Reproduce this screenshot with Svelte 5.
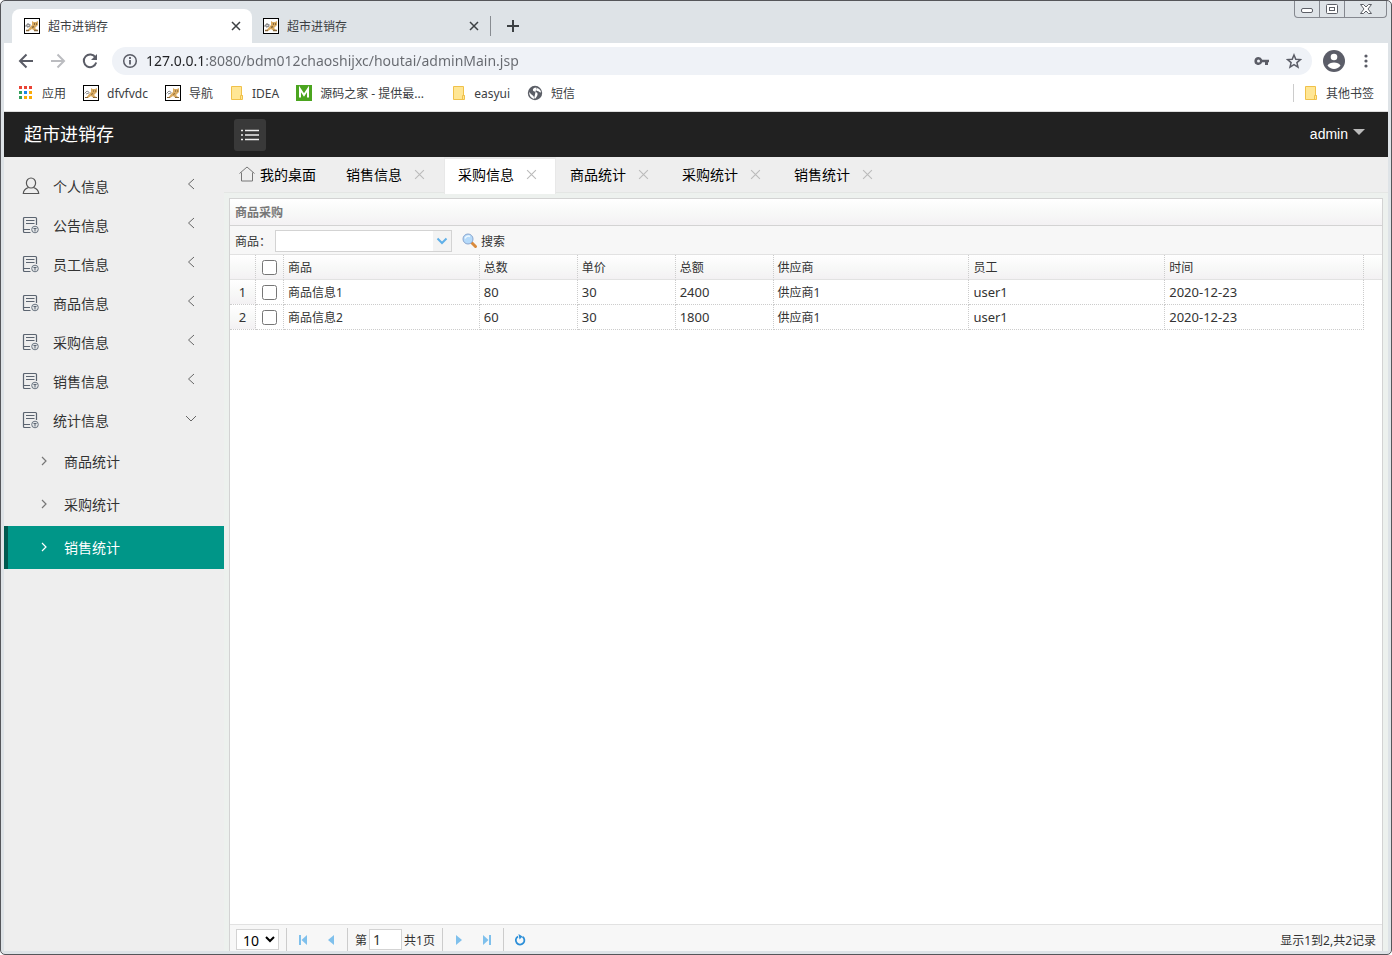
<script lang="ts">
  type Bookmark = {
    name: string;
    icon: string;
  }
  const bookmarks: Bookmark[] = [
    { name: '应用', icon: 'apps' },
    { name: 'dfvfvdc', icon: 'cat' },
    { name: '导航', icon: 'cat' },
    { name: 'IDEA', icon: 'folder' },
    { name: '源码之家 - 提供最...', icon: 'm' },
    { name: 'easyui', icon: 'folder' },
    { name: '短信', icon: 'globe' }
  ]
  const appColors = ['#ea4335', '#ea4335', '#ea4335', '#34a05c', '#1a86e8', '#fbab05', '#34a05c', '#fbab05', '#fbab05']

  // SIDE MENU
  const menus: string[] = ['个人信息', '公告信息', '员工信息', '商品信息', '采购信息', '销售信息', '统计信息']
  const subMenus: string[] = ['商品统计', '采购统计', '销售统计']
  let openMenu = $state('统计信息')
  let currentSub = $state('销售统计')

  // TABS
  const tabs: string[] = ['销售信息', '采购信息', '商品统计', '采购统计', '销售统计']
  let currentTab = $state('采购信息')

  // GRID
  const columns: string[] = ['商品', '总数', '单价', '总额', '供应商', '员工', '时间']
  const rows: string[][] = [
    ['商品信息1', '80', '30', '2400', '供应商1', 'user1', '2020-12-23'],
    ['商品信息2', '60', '30', '1800', '供应商1', 'user1', '2020-12-23']
  ]
  const isLatin = (text: string) => /^[\d\w-]+$/.test(text)
</script>

{#snippet icon(name: string)}
  {#if name == 'cat'}
    <svg width="16" height="16" viewBox="0 0 16 16">
      <rect x="0.5" y="0.5" width="15" height="15" fill="#fff" stroke="#000" />
      <path d="M8 3l1.500 1h2.500L14 3v4l-1.500 1.500L11 10l2.500 2.500H10L8 11l-3 2H3l3-4 2-2z" fill="#d9ab62" />
      <path d="M1.500 8.500L4 6l2.500 1.500M3 9l3-1" fill="none" stroke="#8d8d8d" />
      <path d="M2 12.500h3M10 12.500h4M8 9.500l2-1" fill="none" stroke="#8a6a3c" />
      <path d="M10 6h1M12 6h1" stroke="#6d5430" />
    </svg>
  {:else if name == 'apps'}
    <svg width="16" height="16" viewBox="0 0 16 16">
      {#each appColors as color, i}
        <rect x={1 + (i % 3) * 5} y={1 + Math.floor(i / 3) * 5} width="3" height="3" fill={color} />
      {/each}
    </svg>
  {:else if name == 'folder'}
    <svg width="14" height="16" viewBox="0 0 14 16">
      <path d="M1.500 1.500h10v9h1v4h-11z" fill="#ffe694" stroke="#f0c14a" />
      <path d="M10.500 14v-3.500h2" fill="none" stroke="#f0c14a" />
    </svg>
  {:else if name == 'm'}
    <svg width="16" height="16" viewBox="0 0 16 16">
      <rect width="16" height="16" fill="#4ba51f" />
      <path d="M4 12.500V4l4 6 4-6v8.500" fill="none" stroke="#fff" stroke-width="2" />
    </svg>
  {:else if name == 'globe'}
    <svg width="16" height="16" viewBox="0 0 16 16">
      <circle cx="8" cy="8" r="7.200" fill="#5b5e66" />
      <path d="M9.500 2.500c-3 0-4 1.500-3.500 3s4 1 4.500 3-1 3-2 5l-1.500-.5c0-2-1-2.500-2.500-3.500L2 7c.5 4 2 6 5 7" fill="#fff" />
      <path d="M10 3c-1.500 1-1 3 .5 3s1.500 1.500 3.500 1.500c0-2-1.500-4-4-4.500z" fill="#fff" />
    </svg>
  {/if}
{/snippet}

{#snippet cross(size: number)}
  <svg width={size} height={size} viewBox="0 0 10 10"><path d="M1 1l8 8M9 1l-8 8" fill="none" stroke="currentColor" /></svg>
{/snippet}

<div class="window">
  <div class="window-buttons">
    <button aria-label="最小化"><svg width="14" height="8" viewBox="0 0 14 8"><rect x="1.500" y="3.500" width="11" height="4" rx="1.500" fill="#fff" stroke="#5c5f66" /></svg></button>
    <button aria-label="还原"><svg width="12" height="10" viewBox="0 0 12 10"><rect x="0.500" y="0.500" width="11" height="9" rx="1" fill="#fff" stroke="#5c5f66" /><rect x="3.500" y="3.500" width="5" height="3" fill="#fff" stroke="#5c5f66" /></svg></button>
    <button class="wide" aria-label="关闭"><svg width="12" height="10" viewBox="0 0 12 10"><path d="M.5.5h3L6 3 8.500.5h3L8 5l3.500 4.500h-3L6 7 3.500 9.500h-3L4 5z" fill="#fff" stroke="#5c5f66" /></svg></button>
  </div>

  <div class="tab-strip">
    <div class="browser-tab active">{@render icon('cat')}<span>超市进销存</span><button aria-label="关闭标签页">{@render cross(10)}</button></div>
    <div class="browser-tab">{@render icon('cat')}<span>超市进销存</span><button aria-label="关闭标签页">{@render cross(10)}</button></div>
    <button class="new-tab" aria-label="新标签页"><svg width="14" height="14" viewBox="0 0 14 14"><path d="M7 1v12M1 7h12" stroke="#3c4043" stroke-width="2" /></svg></button>
  </div>

  <div class="toolbar">
    <button aria-label="后退"><svg width="16" height="16" viewBox="0 0 16 16"><path d="M15 8H2M8.500 1.500L2 8l6.500 6.500" fill="none" stroke="#5a5c66" stroke-width="2" /></svg></button>
    <button aria-label="前进"><svg width="16" height="16" viewBox="0 0 16 16"><path d="M1 8h13M7.500 1.500L14 8l-6.500 6.500" fill="none" stroke="#bbbcc0" stroke-width="2" /></svg></button>
    <button aria-label="重新加载"><svg width="16" height="16" viewBox="0 0 16 16"><path d="M13.500 4.500A6.300 6.300 0 1 0 14.200 9.500" fill="none" stroke="#5a5c66" stroke-width="2" /><path d="M15 1v6H9z" fill="#5a5c66" /></svg></button>
    <div class="address">
      <svg width="16" height="16" viewBox="0 0 16 16"><circle cx="8" cy="8" r="6.300" fill="none" stroke="#5a5c66" stroke-width="1.500" /><path d="M8 7v4.500M8 4v2" stroke="#5a5c66" stroke-width="1.800" /></svg>
      <input aria-label="地址" value="127.0.0.1:8080/bdm012chaoshijxc/houtai/adminMain.jsp" />
      <button aria-label="密码"><svg width="16" height="16" viewBox="0 0 16 16"><path d="M4.500 4a4 4 0 1 0 3.700 5.300H11V12h3V9.300h1V6.700H8.200A4 4 0 0 0 4.500 4zm0 2.500a1.500 1.500 0 1 1 0 3 1.500 1.500 0 0 1 0-3z" fill="#5a5c66" /></svg></button>
      <button aria-label="收藏"><svg width="16" height="16" viewBox="0 0 16 16"><path d="M8 2l1.800 4.200 4.600.4-3.500 3 1.100 4.500L8 11.700l-4 2.400 1.100-4.500-3.500-3 4.600-.4z" fill="none" stroke="#5a5c66" stroke-width="1.500" /></svg></button>
    </div>
    <button class="avatar" aria-label="用户"><svg width="22" height="22" viewBox="0 0 22 22"><circle cx="11" cy="11" r="11" fill="#5b5d68" /><circle cx="11" cy="7" r="3.300" fill="#fff" /><path d="M4.500 15.500c2-4 11-4 13 0-3 4.500-10 4.500-13 0z" fill="#fff" /></svg></button>
    <button aria-label="菜单"><svg width="16" height="16" viewBox="0 0 16 16"><circle cx="8" cy="3" r="1.600" fill="#5a5c66" /><circle cx="8" cy="8" r="1.600" fill="#5a5c66" /><circle cx="8" cy="13" r="1.600" fill="#5a5c66" /></svg></button>
  </div>

  <nav class="bookmarks">
    {#each bookmarks as bookmark}
      <a href="#top" class={bookmark.icon}>{@render icon(bookmark.icon)}<span>{bookmark.name}</span></a>
    {/each}
    <a href="#top" class="others">{@render icon('folder')}<span>其他书签</span></a>
  </nav>

  <header>
    <div class="logo">超市进销存</div>
    <button class="toggle" aria-label="展开菜单"><svg width="18" height="12" viewBox="0 0 18 12"><path d="M4 1.500h14M4 6h14M4 10.500h14M0 1.500h2M0 6h2M0 10.500h2" stroke="#eee" stroke-width="1.300" /></svg></button>
    <a class="user" href="#top">admin<svg width="12" height="10" viewBox="0 0 12 10"><path d="M0 0h12L6 6z" fill="#bbb" /></svg></a>
  </header>

  <div class="body">
    <aside>
      {#each menus as menu, i}
        <button class="menu" onclick={() => openMenu = menu}>
          {#if i == 0}
            <svg width="18" height="18" viewBox="0 0 18 18"><ellipse cx="9" cy="6" rx="4.600" ry="5" fill="none" stroke="#555" stroke-width="1.200" /><path d="M6.500 10.500C3.500 11.500 1.500 13 1.300 16.500h15.400c-.2-3.500-2.200-5-5.200-6" fill="none" stroke="#555" stroke-width="1.200" /></svg>
          {:else}
            <svg width="18" height="18" viewBox="0 0 18 18">
              <path d="M8.500 16.500H2.500a1 1 0 0 1-1-1v-13a1 1 0 0 1 1-1h11a1 1 0 0 1 1 1V9" fill="none" stroke="#5b6470" stroke-width="1.200" />
              <path d="M4 4.500h8.500M4 7.500h8.500M2 13.500h6" fill="none" stroke="#5b6470" />
              <circle cx="13" cy="13.500" r="3.300" fill="#e4e6e8" stroke="#6b7682" />
              <path d="M11.500 12.500h3M13 12.500v3" fill="none" stroke="#5b6470" />
            </svg>
          {/if}
          <span>{menu}</span>
          <svg class="arrow" width="12" height="12" viewBox="0 0 12 12"><path d={openMenu == menu ? 'M1 4l5 5 5-5' : 'M9 1L3.500 6 9 11'} fill="none" stroke="#666" /></svg>
        </button>
      {/each}
      {#each subMenus as sub}
        <button class="sub" class:current={currentSub == sub} onclick={() => currentSub = sub}>
          <svg width="8" height="10" viewBox="0 0 8 10"><path d="M2 1l4 4-4 4" fill="none" stroke="currentColor" stroke-width="1.200" /></svg>
          <span>{sub}</span>
        </button>
      {/each}
    </aside>

    <main>
      <div class="tabs">
        <button class="home"><svg width="16" height="16" viewBox="0 0 16 16"><path d="M.5 7.500L8 1l7.500 6.500M2.500 6.500v8.500h11V6.500" fill="none" stroke="#777" /></svg>我的桌面</button>
        {#each tabs as tab}
          <div class="tab" class:active={currentTab == tab}>
            <button onclick={() => currentTab = tab}>{tab}</button>
            <button class="close" aria-label="关闭{tab}">{@render cross(11)}</button>
          </div>
        {/each}
      </div>

      <section class="panel">
        <h1>商品采购</h1>
        <div class="search">
          <label for="goods">商品：</label>
          <div class="combo">
            <select id="goods"><option value=""></option><option>商品信息1</option><option>商品信息2</option></select>
            <svg width="12" height="8" viewBox="0 0 12 8"><path d="M1.500 1.500L6 6l4.500-4.500" fill="none" stroke="#60b0e8" stroke-width="2" /></svg>
          </div>
          <button><svg width="16" height="16" viewBox="0 0 16 16"><path d="M9.500 9.500l4 4" stroke="#d98a3c" stroke-width="3" stroke-linecap="round" /><circle cx="6" cy="6" r="5" fill="#b5dafa" stroke="#8aa6cf" /><path d="M3 5.500a3.500 3.500 0 0 1 5-2" fill="none" stroke="#eef8ff" stroke-width="1.500" /></svg>搜索</button>
        </div>
        <div class="grid">
          <table>
            <colgroup>
              <col class="c-num" /><col class="c-check" /><col class="c-wide" /><col class="c-small" /><col class="c-small" /><col class="c-small" /><col class="c-wide" /><col class="c-wide" /><col /><col class="c-end" />
            </colgroup>
            <thead>
              <tr>
                <th></th>
                <th class="check"><input type="checkbox" aria-label="全选" /></th>
                {#each columns as column}
                  <th>{column}</th>
                {/each}
                <th class="end"></th>
              </tr>
            </thead>
            <tbody>
              {#each rows as row, index}
                <tr>
                  <td class="num">{index + 1}</td>
                  <td class="check"><input type="checkbox" aria-label={row[0]} /></td>
                  {#each row as cell}
                    <td class:latin={isLatin(cell)}>{cell}</td>
                  {/each}
                  <td class="end"></td>
                </tr>
              {/each}
            </tbody>
          </table>
        </div>
        <footer>
          <select class="size" aria-label="每页记录数"><option>10</option><option>20</option></select>
          <i></i>
          <button aria-label="首页"><svg width="10" height="10" viewBox="0 0 10 10"><path d="M1 0h2v10H1zM9 0v10L3.500 5z" fill="#7fc0ec" /></svg></button>
          <button aria-label="上一页"><svg width="10" height="10" viewBox="0 0 10 10"><path d="M8 0v10L2 5z" fill="#7fc0ec" /></svg></button>
          <i></i>
          <label for="page">第</label>
          <input id="page" value="1" />
          <span>共1页</span>
          <i></i>
          <button aria-label="下一页"><svg width="10" height="10" viewBox="0 0 10 10"><path d="M2 0v10l6-5z" fill="#7fc0ec" /></svg></button>
          <button aria-label="末页"><svg width="10" height="10" viewBox="0 0 10 10"><path d="M7 0h2v10H7zM1 0v10l5.500-5z" fill="#7fc0ec" /></svg></button>
          <i></i>
          <button aria-label="刷新"><svg width="12" height="12" viewBox="0 0 12 12"><path d="M4 2.500A4.300 4.300 0 1 0 8.500 2.700" fill="none" stroke="#2d8fd8" stroke-width="1.800" /><path d="M4.500 0l4 2.500-3 3z" fill="#2d8fd8" /></svg></button>
          <span class="total">显示1到2,共2记录</span>
        </footer>
      </section>
    </main>
  </div>
</div>

<style>
  :global(body) {
    background: #fff;
    font-family: "Noto Sans", "Noto Sans CJK SC", sans-serif;
    font-size: 12px;
    color: #333;
  }
  * {
    box-sizing: border-box;
  }
  button {
    display: flex;
    align-items: center;
    justify-content: center;
    padding: 0;
    border: 0;
    background: none;
    font: inherit;
    color: inherit;
  }
  svg {
    display: block;
    flex: none;
  }
  a {
    color: inherit;
    text-decoration: none;
  }
  input, select {
    font: inherit;
    color: inherit;
  }
  .window {
    position: relative;
    display: flex;
    flex-direction: column;
    min-height: 100vh;
    padding: 0 3px 3px;
    border: 1px solid #55565a;
    border-radius: 5px;
    background: #dee3e7;
  }
  .window-buttons {
    position: absolute;
    top: 0;
    right: 4px;
    display: flex;
    border: 1px solid #85888f;
    border-top: 0;
    border-radius: 0 0 4px 4px;
  }
  .window-buttons button {
    width: 25px;
    height: 16px;
    border-right: 1px solid #85888f;
  }
  .window-buttons .wide {
    width: 41px;
    border: 0;
  }

  /* browser */
  .tab-strip {
    display: flex;
    height: 42px;
    padding: 8px 8px 0;
  }
  .browser-tab {
    display: flex;
    align-items: center;
    width: 238px;
    padding: 0 11px;
    color: #3c4043;
  }
  .browser-tab.active {
    width: 240px;
    padding-left: 12px;
    border-radius: 8px 8px 0 0;
    background: #fff;
  }
  .browser-tab span {
    flex: 1;
    margin-left: 8px;
  }
  .browser-tab path {
    stroke-width: 1.500;
  }
  .new-tab {
    align-self: center;
    width: 45px;
    height: 20px;
    border-left: 1px solid #888c91;
  }
  .toolbar {
    display: flex;
    align-items: center;
    height: 36px;
    padding: 0 6px;
    background: #fff;
  }
  .toolbar > button {
    width: 32px;
    height: 32px;
  }
  .address {
    flex: 1;
    display: flex;
    align-items: center;
    height: 28px;
    margin: 0 6px;
    padding: 0 10px;
    border-radius: 14px;
    background: #eff2f7;
  }
  .address input {
    flex: 1;
    margin-left: 8px;
    padding: 0 0 2px;
    border: 0;
    font-size: 14px;
    color: transparent;
    background: linear-gradient(to right, #202124 60px, #66696f 60px);
    background-clip: text;
  }
  .address button {
    width: 16px;
    margin-left: 16px;
  }
  .bookmarks {
    display: flex;
    align-items: center;
    gap: 17px;
    height: 33px;
    padding: 0 14px 4px;
    border-bottom: 1px solid #ddd;
    background: #fff;
    color: #3c4043;
  }
  .bookmarks a {
    display: flex;
    align-items: center;
    gap: 8px;
  }
  .bookmarks .m {
    width: 139px;
    white-space: nowrap;
  }
  .bookmarks .others {
    margin-left: auto;
    padding-left: 10px;
    border-left: 1px solid #ccc;
  }

  /* admin */
  header {
    display: flex;
    align-items: center;
    height: 45px;
    padding: 0 23px 0 20px;
    background: #212121;
    color: #fff;
  }
  .logo {
    width: 210px;
    padding-bottom: 4px;
    font-size: 18px;
  }
  .toggle {
    width: 32px;
    height: 32px;
    border-radius: 3px;
    background: #393939;
  }
  .user {
    display: flex;
    align-items: center;
    gap: 5px;
    margin-left: auto;
    padding-bottom: 2px;
    font: 14px "Liberation Sans", sans-serif;
  }
  .body {
    flex: 1;
    display: flex;
    background: #edf1ee;
  }
  aside {
    width: 220px;
    padding-top: 10px;
    background: #eee;
    font-size: 14px;
  }
  .menu {
    width: 100%;
    height: 39px;
    padding: 0 27px 2px 18px;
  }
  .menu span {
    flex: 1;
    margin-left: 13px;
    text-align: left;
  }
  .arrow {
    margin-bottom: 4px;
  }
  .sub {
    justify-content: flex-start;
    gap: 16px;
    width: 100%;
    height: 43px;
    padding: 0 0 2px 32px;
    border-left: 4px solid transparent;
  }
  .sub svg {
    color: #777;
  }
  .sub.current {
    border-color: #005a50;
    background: #009688;
    color: #fff;
  }
  .sub.current svg {
    color: #fff;
  }
  main {
    flex: 1;
    min-width: 0;
    display: flex;
    flex-direction: column;
  }
  .tabs {
    display: flex;
    height: 36px;
    margin-bottom: 5px;
    padding-left: 15px;
    border-bottom: 1px solid #e4e6e4;
    background: #eee;
    font-size: 14px;
    color: #000;
  }
  .home {
    gap: 5px;
    width: 93px;
    padding-bottom: 2px;
    justify-content: flex-start;
  }
  .tab {
    display: flex;
    align-items: center;
    width: 112px;
    height: 37px;
    padding: 0 0 3px 14px;
  }
  .tab.active {
    padding: 0 0 5px 13px;
    border: 1px solid #e8e8e8;
    border-width: 2px 1px 0;
    background: #fff;
  }
  .close {
    margin-left: 12px;
    color: #bbb;
  }
  .panel {
    flex: 1;
    display: flex;
    flex-direction: column;
    margin: 0 5px;
    border: 1px solid #d3d3d3;
    border-bottom: 0;
    background: #fff;
  }
  h1 {
    height: 27px;
    margin: 0;
    padding-left: 5px;
    border-bottom: 1px solid #d3d3d3;
    background: linear-gradient(#fff, #f8f9f8 50%, #f3f1f3);
    font-size: 12px;
    line-height: 28px;
    color: #777;
  }
  .search {
    display: flex;
    align-items: center;
    height: 29px;
    padding: 2px 0 0 5px;
    border-bottom: 1px solid #e2e2e2;
    background: #f7f7f7;
  }
  .search label {
    width: 40px;
    white-space: nowrap;
  }
  .combo {
    position: relative;
    width: 177px;
    margin-right: 10px;
  }
  .combo select {
    display: block;
    width: 100%;
    height: 22px;
    border: 1px solid #d3d3d3;
    border-radius: 0;
    appearance: none;
    background: linear-gradient(to left, #f3f3f3 18px, #fff 18px);
  }
  .combo svg {
    position: absolute;
    top: 7px;
    right: 4px;
    pointer-events: none;
  }
  .search button {
    gap: 3px;
  }
  .grid {
    flex: 1;
  }
  table {
    width: 100%;
    table-layout: fixed;
    border-collapse: separate;
    border-spacing: 0;
  }
  .c-num {
    width: 26px;
  }
  .c-check {
    width: 28px;
  }
  .c-wide {
    width: 17%;
  }
  .c-small {
    width: 8.5%;
  }
  .c-end {
    width: 18px;
  }
  th, td {
    height: 25px;
    padding: 2px 4px 0;
    border-right: 1px dotted #ccc;
    border-bottom: 1px dotted #ccc;
    font-weight: normal;
    line-height: 16px;
    text-align: left;
  }
  th {
    border-bottom: 1px solid #e2e2e2;
    background: linear-gradient(#fff, #f8f9f8 50%, #f3f1f3);
  }
  .latin, .num {
    padding-top: 0;
    font-size: 13px;
  }
  .num {
    background: linear-gradient(#fff, #f8f9f8 50%, #f3f1f3);
    text-align: center;
  }
  .check {
    padding: 0;
    text-align: center;
  }
  .check input {
    display: block;
    width: 15px;
    height: 15px;
    margin: 0 auto;
  }
  td.end {
    border: 0;
  }
  th.end {
    border-right: 0;
  }
  footer {
    display: flex;
    align-items: center;
    height: 27px;
    padding: 3px 6px 0;
    border-top: 1px solid #e2e2e2;
    background: #f7f7f7;
  }
  .size {
    width: 43px;
    height: 21px;
    padding-left: 2px;
    border: 1px solid #d3d3d3;
    background: #fff;
    font-size: 14px;
    color: #000;
  }
  footer i {
    width: 1px;
    height: 23px;
    margin: 0 7px;
    background: #ccc;
  }
  footer button {
    width: 18px;
    height: 18px;
  }
  footer button + button {
    margin-left: 10px;
  }
  #page {
    width: 33px;
    height: 21px;
    margin: 0 2px;
    padding: 0 3px;
    border: 1px solid #d3d3d3;
    background: #fff;
    font-size: 14px;
  }
  .total {
    margin-left: auto;
  }
</style>
